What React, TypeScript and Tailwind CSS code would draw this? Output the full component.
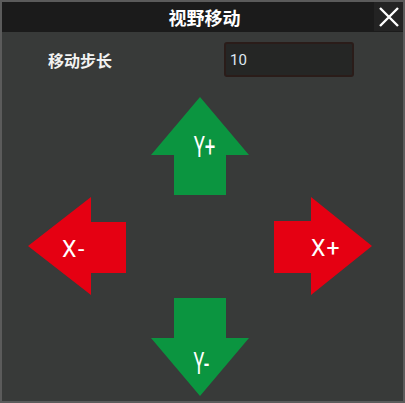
import { useState } from 'react'

const GREEN = '#0b9540'
const RED = '#e50012'

type Dir = 'up' | 'down' | 'left' | 'right'

const shapes: Record<Dir, string> = {
  up: '49,0 98,58 75,58 75,98 23,98 23,58 0,58',
  down: '23,0 75,0 75,40 98,40 49,98 0,40 23,40',
  left: '0,49 63,0 63,25 98,25 98,76 63,76 63,98',
  right: '0,24 37,24 37,0 98,49 37,98 37,76 0,76',
}

function ArrowButton({
  dir,
  label,
  color,
  textClass,
  onClick,
}: {
  dir: Dir
  label: string
  color: string
  textClass: string
  onClick: () => void
}) {
  return (
    <button
      onClick={onClick}
      className="relative w-[98px] h-[98px] cursor-pointer"
    >
      <svg
        viewBox="0 0 98 98"
        width="98"
        height="98"
        className="absolute inset-0"
      >
        <polygon points={shapes[dir]} fill={color} />
      </svg>
      <span
        className={`absolute text-white font-normal leading-none whitespace-nowrap font-['Roboto',sans-serif] ${textClass}`}
      >
        {label}
      </span>
    </button>
  )
}

export default function App() {
  const [step, setStep] = useState('10')
  const [pos, setPos] = useState({ x: 0, y: 0 })
  const n = Number(step) || 0

  return (
    <div className="w-[405px] h-[403px] border-2 border-[#5b5b5b] bg-[#383a39] flex flex-col font-['Noto_Sans_CJK_SC','Noto_Sans',sans-serif]">
      <div className="relative h-[30px] bg-[#1b1b1b] flex items-center justify-center shrink-0">
        <span className="text-white text-[18px] font-bold leading-none pl-[4px]">
          视野移动
        </span>
        <button className="absolute right-0 top-0 w-[29px] h-[29px] bg-[#232323] flex items-center justify-center">
          <svg width="22" height="22" viewBox="0 0 22 22">
            <path
              d="M2 2 L20 20 M20 2 L2 20"
              stroke="#fff"
              strokeWidth="2.4"
              fill="none"
            />
          </svg>
        </button>
      </div>

      <div className="flex items-center mt-[10px] pl-[46px]">
        <span className="w-[176px] text-[16px] font-bold text-[#f2f2f2] leading-none">
          移动步长
        </span>
        <input
          value={step}
          onChange={(e) => setStep(e.target.value)}
          className="w-[130px] h-[35px] bg-[#252625] border-2 border-[#2a1c19] rounded-[3px] px-[4px] text-[15px] text-[#dfe8f2] outline-none font-['Roboto',sans-serif]"
        />
      </div>

      <div
        className="grid grid-cols-[98px_98px_98px] grid-rows-[98px_99px_98px] gap-x-[25px] gap-y-[2px] mt-[20px] ml-[26px]"
        data-x={pos.x}
        data-y={pos.y}
      >
        <div />
        <ArrowButton
          dir="up"
          label="Y+"
          color={GREEN}
          textClass="left-[36px] top-[35px] text-[30px] scale-x-[0.62]"
          onClick={() => setPos({ ...pos, y: pos.y + n })}
        />
        <div />
        <ArrowButton
          dir="left"
          label="X-"
          color={RED}
          textClass="left-[34px] top-[41px] text-[23px] tracking-[2px]"
          onClick={() => setPos({ ...pos, x: pos.x - n })}
        />
        <div />
        <ArrowButton
          dir="right"
          label="X+"
          color={RED}
          textClass="left-[37px] top-[40px] text-[23px] tracking-[1px]"
          onClick={() => setPos({ ...pos, x: pos.x + n })}
        />
        <div />
        <ArrowButton
          dir="down"
          label="Y-"
          color={GREEN}
          textClass="left-[37px] top-[50px] text-[31px] scale-x-[0.58]"
          onClick={() => setPos({ ...pos, y: pos.y - n })}
        />
        <div />
      </div>
    </div>
  )
}
